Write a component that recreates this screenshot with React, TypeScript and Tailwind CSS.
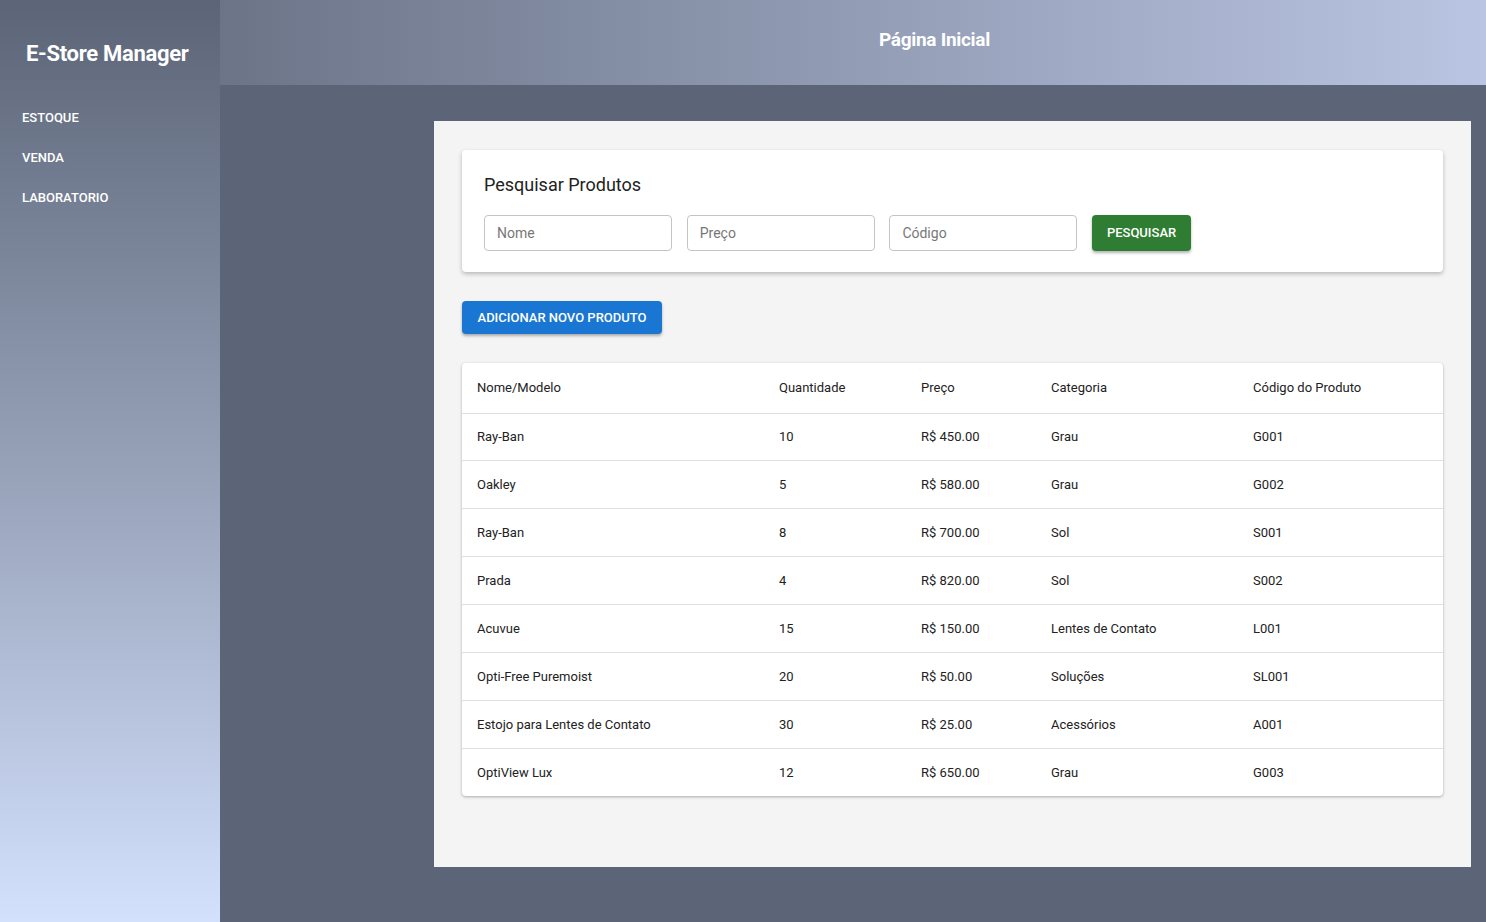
import React from "react";

type Produto = {
  nome: string;
  quantidade: number;
  preco: string;
  categoria: string;
  codigo: string;
};

const produtos: Produto[] = [
  { nome: "Ray-Ban", quantidade: 10, preco: "R$ 450.00", categoria: "Grau", codigo: "G001" },
  { nome: "Oakley", quantidade: 5, preco: "R$ 580.00", categoria: "Grau", codigo: "G002" },
  { nome: "Ray-Ban", quantidade: 8, preco: "R$ 700.00", categoria: "Sol", codigo: "S001" },
  { nome: "Prada", quantidade: 4, preco: "R$ 820.00", categoria: "Sol", codigo: "S002" },
  { nome: "Acuvue", quantidade: 15, preco: "R$ 150.00", categoria: "Lentes de Contato", codigo: "L001" },
  { nome: "Opti-Free Puremoist", quantidade: 20, preco: "R$ 50.00", categoria: "Soluções", codigo: "SL001" },
  { nome: "Estojo para Lentes de Contato", quantidade: 30, preco: "R$ 25.00", categoria: "Acessórios", codigo: "A001" },
  { nome: "OptiView Lux", quantidade: 12, preco: "R$ 650.00", categoria: "Grau", codigo: "G003" },
];

function Sidebar() {
  return (
    <aside className="w-[220px] shrink-0 min-h-screen bg-gradient-to-b from-[#5c6577] to-[#d4e1fd] text-white">
      <h1 className="pt-[39px] pl-[26px] text-[22px] font-bold leading-[30px] tracking-[-0.3px]">
        E-Store Manager
      </h1>
      <nav className="mt-[29px] flex flex-col">
        {["ESTOQUE", "VENDA", "LABORATORIO"].map((item) => (
          <a key={item} className="pl-[22px] h-10 flex items-center text-[13px] font-medium cursor-pointer">
            {item}
          </a>
        ))}
      </nav>
    </aside>
  );
}

function Busca() {
  return (
    <div className="bg-white rounded shadow-[0_2px_4px_rgba(0,0,0,0.25)] px-[22px] pt-[23px] pb-[21px]">
      <h2 className="text-[18px] text-[#222] leading-6">Pesquisar Produtos</h2>
      <div className="mt-[18px] flex items-center gap-[14.7px]">
        {["Nome", "Preço", "Código"].map((p) => (
          <input
            key={p}
            placeholder={p}
            className="w-[188px] h-9 border border-[#c4c4c4] rounded px-3 text-[14px] text-[#333] placeholder:text-[#777] outline-none bg-white"
          />
        ))}
        <button className="h-9 w-[99px] bg-[#2e7d32] text-white text-[13px] font-medium rounded shadow-[0_2px_3px_rgba(0,0,0,0.3)]">
          PESQUISAR
        </button>
      </div>
    </div>
  );
}

function Tabela() {
  const th = "px-[15px] text-left font-normal";
  return (
    <div className="bg-white rounded shadow-[0_1px_3px_rgba(0,0,0,0.3)] overflow-hidden">
      <table className="w-full text-[13px] text-[#222] border-collapse">
        <thead>
          <tr className="h-[50px] border-b border-[#e0e0e0]">
            <th className={th + " w-[302px]"}>Nome/Modelo</th>
            <th className={th + " w-[142px]"}>Quantidade</th>
            <th className={th + " w-[130px]"}>Preço</th>
            <th className={th + " w-[202px]"}>Categoria</th>
            <th className={th}>Código do Produto</th>
          </tr>
        </thead>
        <tbody>
          {produtos.map((p, i) => (
            <tr key={i} className={"h-[47.92px] " + (i < produtos.length - 1 ? "border-b border-[#e0e0e0]" : "")}>
              <td className="px-[15px]">{p.nome}</td>
              <td className="px-[15px]">{p.quantidade}</td>
              <td className="px-[15px]">{p.preco}</td>
              <td className="px-[15px]">{p.categoria}</td>
              <td className="px-[15px]">{p.codigo}</td>
            </tr>
          ))}
        </tbody>
      </table>
    </div>
  );
}

export default function App() {
  return (
    <div className="flex min-h-screen font-['Roboto',sans-serif]">
      <Sidebar />
      <div className="flex-1 flex flex-col bg-[#5c6577]">
        <header className="h-[85px] bg-gradient-to-r from-[#6c7588] to-[#bac5e3] text-white">
          <h1 className="pl-[659px] pt-[28px] text-[19px] font-bold leading-6 tracking-[-0.3px]">Página Inicial</h1>
        </header>
        <main className="pt-9 pl-[214px] pr-[15px] pb-[55px]">
          <div className="bg-[#f4f4f4] px-7 pt-[29px] pb-[71px]">
            <Busca />
            <button className="mt-[29px] h-[33px] w-[200px] bg-[#1976d2] text-white text-[13px] font-medium rounded shadow-[0_2px_3px_rgba(0,0,0,0.3)]">
              ADICIONAR NOVO PRODUTO
            </button>
            <div className="mt-[29px]">
              <Tabela />
            </div>
          </div>
        </main>
      </div>
    </div>
  );
}
